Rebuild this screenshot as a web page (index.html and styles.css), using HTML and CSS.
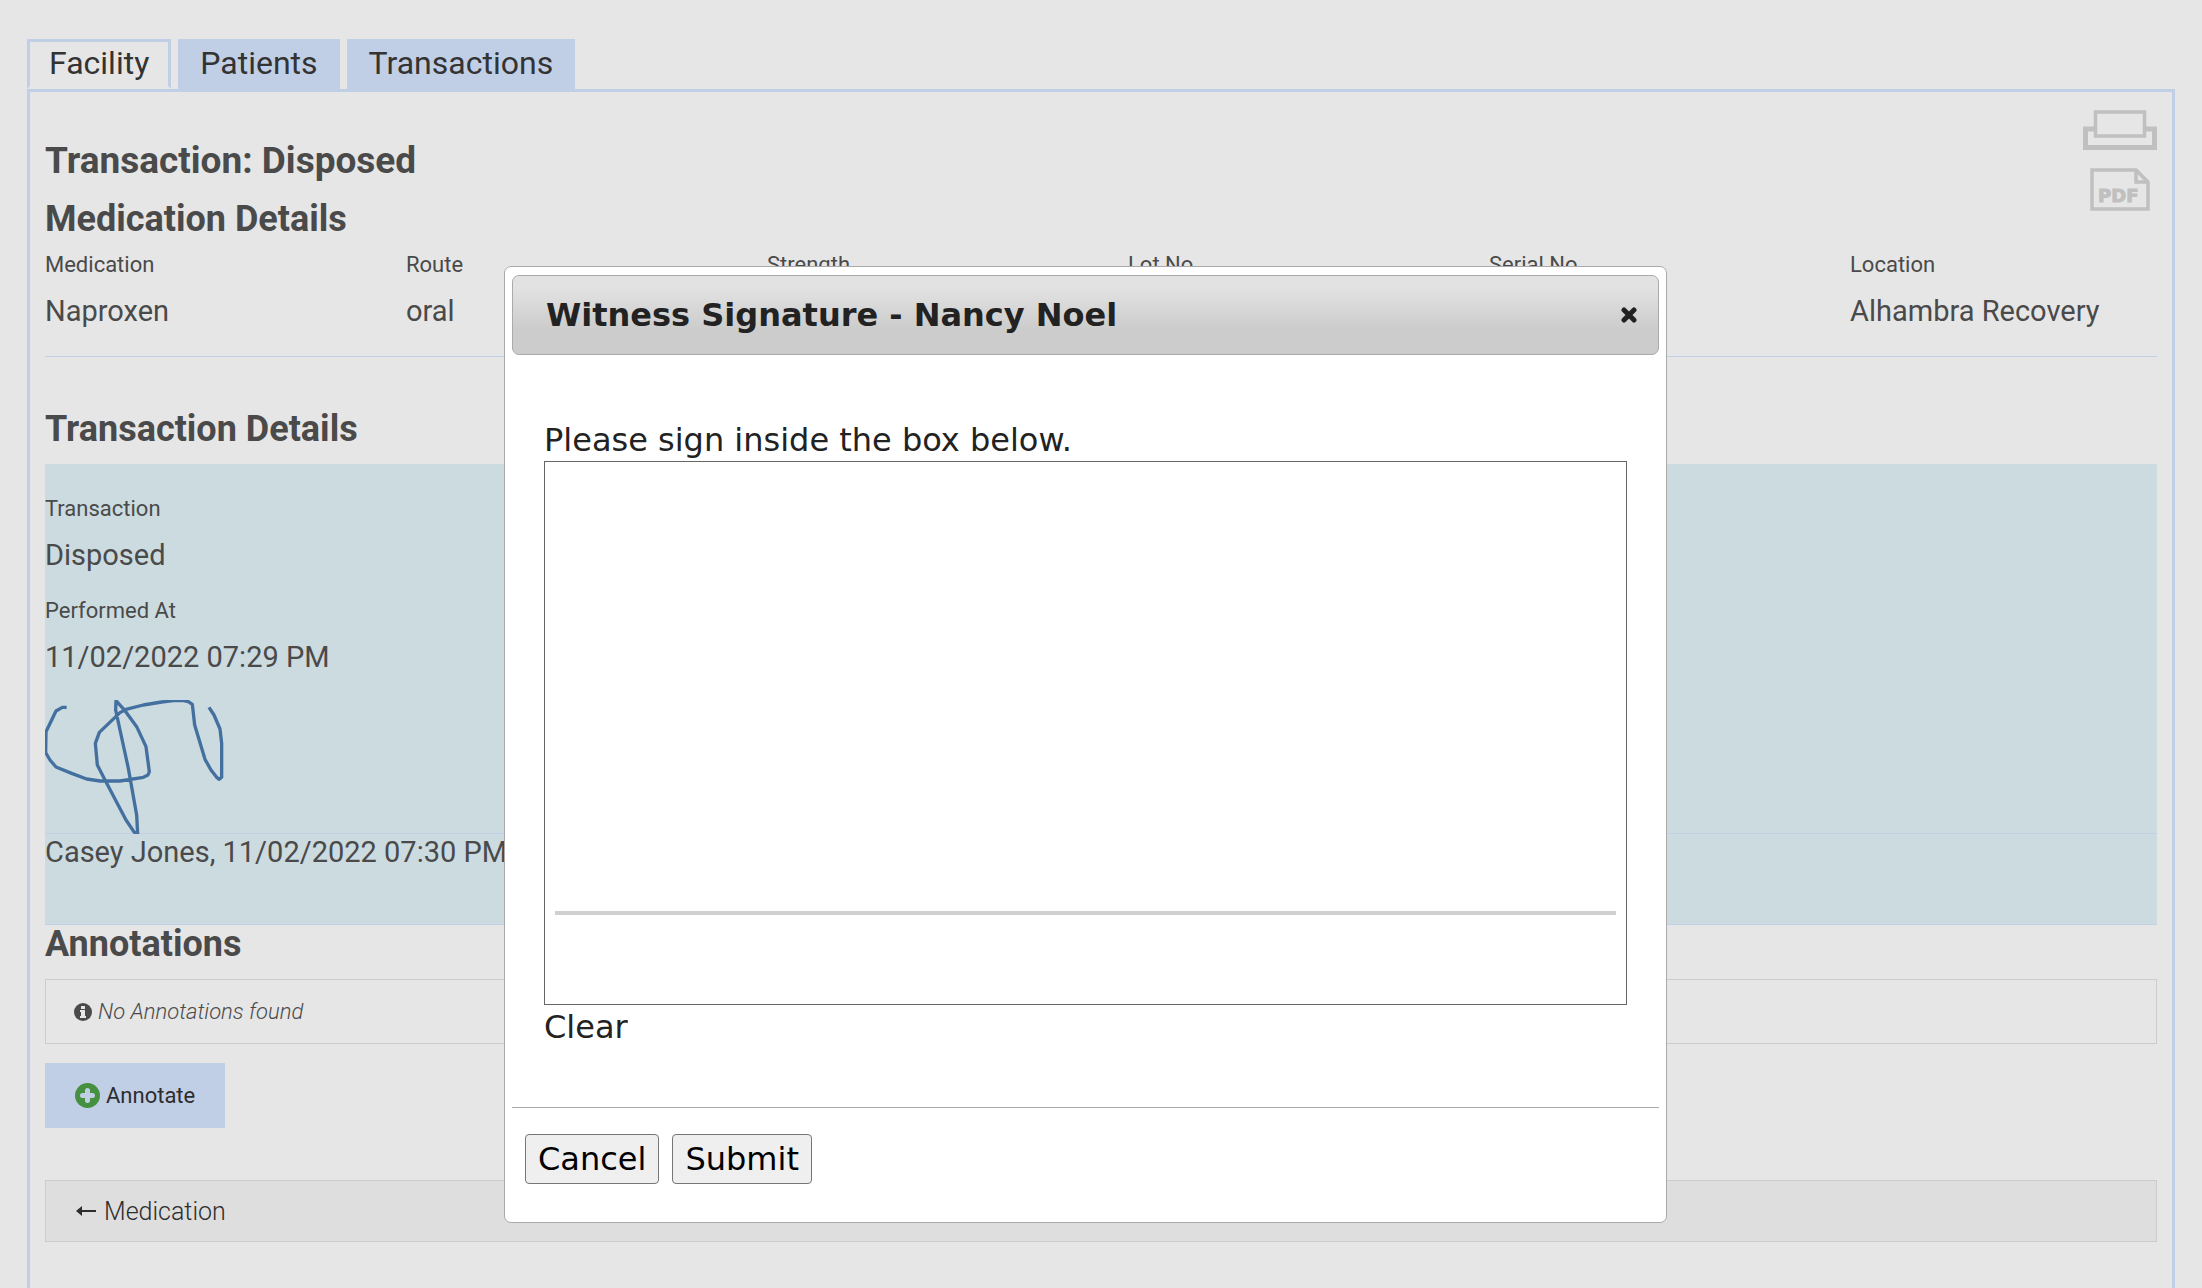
FILE: index.html
```html
<!DOCTYPE html>
<html lang="en">
<head>
    <meta charset="UTF-8">
    <meta name="viewport" content="width=device-width, initial-scale=1.0">
    <title>Transaction: Disposed</title>
    <link rel="stylesheet" href="styles.css">
</head>
<body>
    <nav class="tabs">
        <a href="#facility" class="tab active">Facility</a>
        <a href="#patients" class="tab">Patients</a>
        <a href="#transactions" class="tab">Transactions</a>
    </nav>

    <main class="panel">
        <header class="panel-header">
            <div class="panel-titles">
                <h1>Transaction: Disposed</h1>
                <h2>Medication Details</h2>
            </div>
            <div class="export-links">
                <a href="#print" aria-label="Print">
                    <svg width="74" height="40" viewBox="0 0 74 40" fill="none" stroke="#c0c0c0">
                        <rect x="12.5" y="2" width="49" height="24" stroke-width="3.5"/>
                        <path d="M12 19H2.5v18.500h69V19H62" stroke-width="5"/>
                    </svg>
                </a>
                <a href="#pdf" aria-label="PDF">
                    <svg width="60" height="43" viewBox="0 0 60 43" fill="none" stroke="#c0c0c0" stroke-width="3.5">
                        <path d="M2 2H46L58 14V41H2Z"/>
                        <path d="M46 2V14H58"/>
                        <text x="8" y="34" class="pdf-text">PDF</text>
                    </svg>
                </a>
            </div>
        </header>

        <dl class="details">
            <div><dt>Medication</dt><dd>Naproxen</dd></div>
            <div><dt>Route</dt><dd>oral</dd></div>
            <div><dt>Strength</dt><dd></dd></div>
            <div><dt>Lot No</dt><dd></dd></div>
            <div><dt>Serial No</dt><dd></dd></div>
            <div><dt>Location</dt><dd>Alhambra Recovery</dd></div>
        </dl>

        <h2>Transaction Details</h2>
        <section class="transaction">
            <dl class="transaction-info">
                <div><dt>Transaction</dt><dd>Disposed</dd></div>
                <div><dt>Performed At</dt><dd>11/02/2022 07:29 PM</dd></div>
            </dl>
            <div class="signature">
                <svg width="200" height="134" viewBox="0 0 600 402" fill="none" stroke="#44709f" stroke-width="10" stroke-linejoin="round">
                    <path d="M65 22H52L33 33L3 95L2 158L15 180L33 201L80 220L125 237L165 243H225L295 232L309 225L313 215L303 140L275 80L240 32L213 2L212 30L250 205L275 345L278 402L268 397L243 360L180 240L157 195L151 130L163 97L225 38L243 28L295 15L350 6L385 2H415L430 5L442 13L449 75L480 178L498 210L515 232L523 238L530 232V130L525 87L507 45L492 22"/>
                </svg>
            </div>
            <p class="signed-by">Casey Jones, 11/02/2022 07:30 PM</p>
        </section>

        <h2>Annotations</h2>
        <p class="empty">
            <svg width="18" height="18" viewBox="0 0 18 18">
                <circle cx="9" cy="9" r="9" fill="#4a4a4a"/>
                <path d="M7 3h4v3H7zM6 7h5v6h1v2H6v-2h1V9H6z" fill="#e6e6e6"/>
            </svg>
            <em>No Annotations found</em>
        </p>
        <button type="button" class="annotate">
            <svg width="25" height="25" viewBox="0 0 25 25">
                <circle cx="12.5" cy="12.5" r="12.5" fill="#469041"/>
                <path d="M12.5 7.5v10M7.500 12.500h10" stroke="#c1cfe6" stroke-width="5" stroke-linecap="round"/>
            </svg>
            Annotate
        </button>
        <a href="#medication" class="back">
            <svg width="20" height="12" viewBox="0 0 20 12">
                <path d="M0 6L6 1V11Z" fill="#2d2d2d"/>
                <path d="M5 6H20" stroke="#2d2d2d" stroke-width="2"/>
            </svg>
            Medication
        </a>
    </main>

    <div class="dialog" role="dialog" aria-labelledby="dialog-title">
        <div class="dialog-titlebar">
            <span id="dialog-title">Witness Signature - Nancy Noel</span>
            <button type="button" class="dialog-close" aria-label="Close">
                <svg width="16" height="16" viewBox="0 0 16 16">
                    <path d="M3 3L13 13M13 3L3 13" stroke="#222" stroke-width="5" stroke-linecap="round"/>
                </svg>
            </button>
        </div>
        <div class="dialog-content">
            <p>Please sign inside the box below.</p>
            <div class="sign-pad"><div class="sign-line"></div></div>
            <button type="button" class="clear">Clear</button>
        </div>
        <div class="dialog-buttons">
            <button type="button">Cancel</button>
            <button type="button">Submit</button>
        </div>
    </div>
</body>
</html>
```
FILE: styles.css
```css
* {
    box-sizing: border-box;
}

body {
    margin: 0;
    min-height: 100vh;
    padding: 39px 27px 0;
    display: flex;
    flex-direction: column;
    background-color: #e6e6e6;
    color: #4a4a4a;
    font-family: Roboto, sans-serif;
    font-size: 29px;
}

h1, h2, p, dl, dd {
    margin: 0;
}

h1 {
    font-size: 37px;
    line-height: 58px;
}

h2 {
    font-size: 36px;
    line-height: 38px;
}

svg {
    display: block;
}

button {
    font-family: inherit;
    cursor: pointer;
}

/* tabs */
.tabs {
    display: flex;
    gap: 7px;
}

.tab {
    height: 50px;
    padding: 0 19px;
    border: 3px solid #c1cfe6;
    background-color: #c1cfe6;
    color: #333;
    font-size: 32px;
    line-height: 42px;
    text-decoration: none;
}

.tab.active {
    border-bottom-color: #e6e6e6;
    background-color: #e6e6e6;
}

.panel {
    flex: 1;
    padding: 18px 15px 46px;
    border: 3px solid #c1cfe6;
    border-bottom: 0;
}

.panel-header {
    display: flex;
    justify-content: space-between;
    align-items: flex-start;
}

.panel-titles {
    padding-top: 22px;
}

.panel-titles h2 {
    margin: 10px 0;
}

.export-links {
    display: flex;
    flex-direction: column;
    align-items: center;
    gap: 18px;
}

.pdf-text {
    fill: #c0c0c0;
    stroke-width: 1px;
    font-family: "DejaVu Sans", sans-serif;
    font-size: 18px;
    font-weight: bold;
}

/* details */
.details {
    display: grid;
    grid-template-columns: repeat(6, 1fr);
    column-gap: 54px;
    margin-bottom: 53px;
    padding-bottom: 16px;
    border-bottom: 1px solid #c1cfe6;
}

.details div {
    min-width: 0;
}

dt {
    font-size: 22px;
    line-height: 34px;
}

dd {
    line-height: 58px;
    white-space: nowrap;
}

.transaction {
    margin-top: 16px;
    padding: 28px 0 54px;
    border-bottom: 1px solid #c1cfe6;
    background-color: #ccdbe0;
}

.transaction-info {
    display: grid;
    row-gap: 10px;
}

.signature {
    height: 148px;
    padding-top: 14px;
    border-bottom: 1px solid #c1cfe6;
}

.signed-by {
    line-height: 36px;
}

/* annotations */
.empty {
    display: flex;
    align-items: center;
    gap: 6px;
    height: 65px;
    margin: 16px 0 19px;
    padding: 0 28px;
    border: 1px solid #ccc;
    font-size: 22px;
    font-weight: 300;
}

.annotate {
    display: flex;
    align-items: center;
    gap: 6px;
    height: 65px;
    padding: 0 30px;
    border: 0;
    background-color: #c1cfe6;
    color: #2d2d2d;
    font-size: 22px;
}

.back {
    display: flex;
    align-items: center;
    gap: 8px;
    height: 62px;
    margin-top: 52px;
    padding: 0 30px;
    border: 1px solid #ccc;
    background-color: #dedede;
    color: #2d2d2d;
    font-size: 25px;
    font-weight: 300;
    text-decoration: none;
}

/* signature dialog */
.dialog {
    position: absolute;
    top: 266px;
    left: 504px;
    width: 1163px;
    max-width: 100%;
    padding: 8px 7px;
    border: 1px solid #aaa;
    border-radius: 7px;
    background-color: #fff;
    color: #222;
    font-family: "DejaVu Sans", sans-serif;
    font-size: 32px;
}

.dialog-titlebar {
    display: flex;
    justify-content: space-between;
    align-items: center;
    height: 80px;
    padding: 0 21px 0 33px;
    border: 1px solid #aaa;
    border-radius: 7px;
    background: linear-gradient(#e2e2e2 15%, #ccc 68%);
    font-weight: bold;
}

.dialog-close {
    padding: 0;
    border: 0;
    background: none;
}

.dialog-content {
    padding: 64px 32px 58px;
}

.dialog-content p {
    line-height: 42px;
}

.sign-pad {
    display: flex;
    flex-direction: column;
    justify-content: flex-end;
    height: 544px;
    padding: 0 10px 89px;
    border: 1px solid #666;
}

.sign-line {
    height: 4px;
    background-color: #cfcfcf;
}

.clear {
    display: block;
    padding: 0;
    border: 0;
    background: none;
    color: #222;
    font-size: 32px;
    line-height: 44px;
}

.dialog-buttons {
    display: flex;
    gap: 13px;
    padding: 26px 13px 30px;
    border-top: 1px solid #aaa;
}

.dialog-buttons button {
    height: 50px;
    padding: 0 12px;
    border: 1px solid #767676;
    border-radius: 4px;
    background-color: #efefef;
    color: #000;
    font-size: 32px;
}
```
